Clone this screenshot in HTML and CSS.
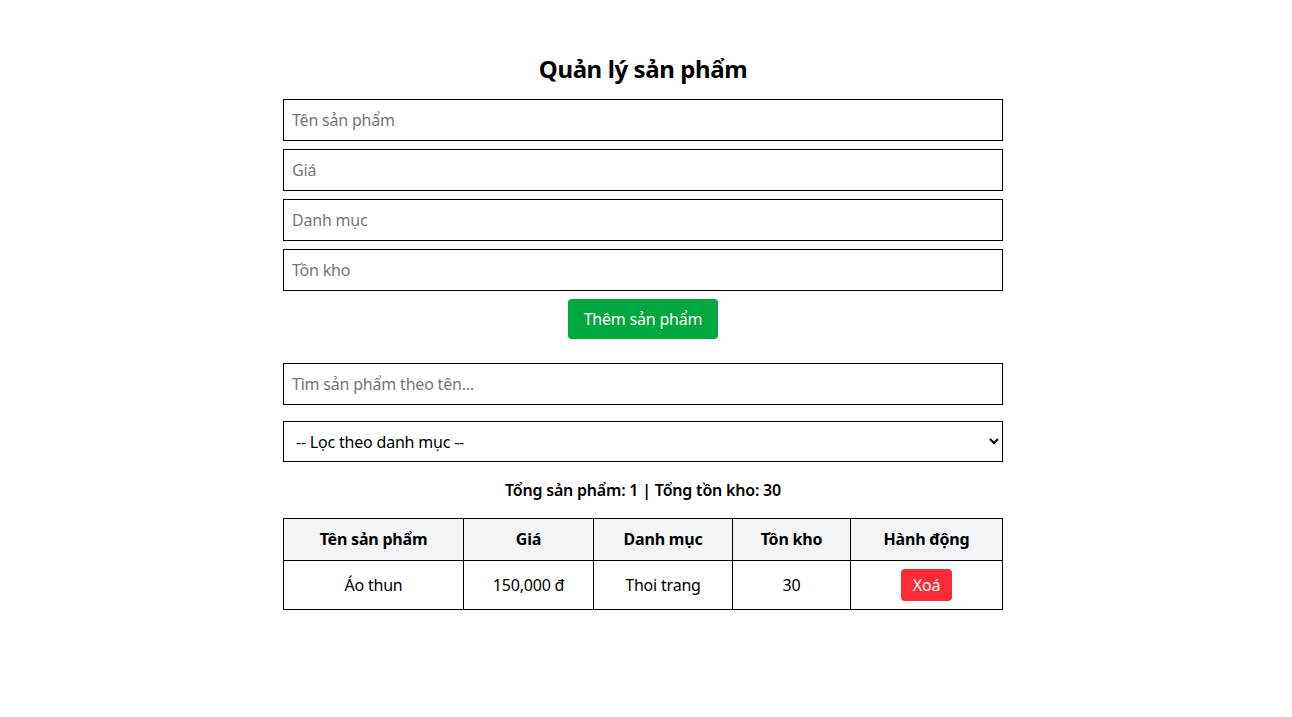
FILE: index.html
```html
<!DOCTYPE html>
<html lang="vi">
<head>
<meta charset="utf-8">
<title>Quản lý sản phẩm</title>
<link rel="stylesheet" href="styles.css">
</head>
<body>
<main class="container">
  <h1 class="title">Quản lý sản phẩm</h1>
  <form class="form">
    <input class="field" type="text" placeholder="Tên sản phẩm">
    <input class="field" type="text" placeholder="Giá">
    <input class="field" type="text" placeholder="Danh mục">
    <input class="field" type="text" placeholder="Tồn kho">
    <button class="btn-add" type="button">Thêm sản phẩm</button>
  </form>
  <input class="field search" type="text" placeholder="Tìm sản phẩm theo tên...">
  <select class="filter">
    <option>-- Lọc theo danh mục --</option>
  </select>
  <p class="summary">Tổng sản phẩm: 1 | Tổng tồn kho: 30</p>
  <table class="table">
    <colgroup>
      <col class="c-name"><col class="c-price"><col class="c-cat"><col class="c-stock"><col class="c-act">
    </colgroup>
    <thead>
      <tr><th>Tên sản phẩm</th><th>Giá</th><th>Danh mục</th><th>Tồn kho</th><th>Hành động</th></tr>
    </thead>
    <tbody>
      <tr><td>Áo thun</td><td>150,000 đ</td><td>Thoi trang</td><td>30</td><td><button class="btn-del" type="button">Xoá</button></td></tr>
    </tbody>
  </table>
</main>
</body>
</html>
```

FILE: styles.css
```css
* { box-sizing: border-box; }
html, body { background: #fff; }
body {
  margin: 0 6px 0 0;
  font-family: "Noto Sans", "Open Sans", sans-serif;
  color: #000;
  font-size: 16px;
  letter-spacing: -0.2px;
}
.container {
  width: 720px;
  margin: 0 auto;
  display: flex;
  flex-direction: column;
}
.title {
  margin: 53px 0 14px;
  font-size: 24px;
  line-height: 32px;
  font-weight: 700;
  text-align: center;
  letter-spacing: -0.4px;
}
.form {
  display: flex;
  flex-direction: column;
  gap: 8px;
}
.field {
  width: 100%;
  height: 42px;
  border: 1px solid #000;
  border-radius: 0;
  padding: 0 8px;
  font-family: inherit;
  font-size: 16px;
  letter-spacing: -0.2px;
  color: #000;
  background: #fff;
  outline: none;
}
.field::placeholder { color: #757575; }
.btn-add {
  align-self: center;
  height: 40px;
  padding: 0 16px;
  border: none;
  border-radius: 4px;
  background: #00a63e;
  color: #fff;
  font-family: inherit;
  font-size: 16px;
  letter-spacing: -0.2px;
}
.search { margin-top: 24px; }
.filter {
  margin-top: 16px;
  width: 100%;
  height: 41px;
  border: 1px solid #000;
  border-radius: 0;
  padding: 0 8px;
  background: #fff;
  color: #000;
  font-family: inherit;
  font-size: 16px;
  letter-spacing: -0.2px;
}
.summary {
  margin: 16px 0;
  text-align: center;
  font-weight: 600;
  line-height: 24px;
}
.table {
  width: 719px;
  border-collapse: collapse;
  table-layout: fixed;
}
.c-name { width: 180px; }
.c-price { width: 130px; }
.c-cat { width: 139px; }
.c-stock { width: 118px; }
.c-act { width: 152px; }
.table th, .table td {
  border: 1px solid #000;
  text-align: center;
  vertical-align: middle;
}
.table th {
  background: #f3f4f6;
  font-weight: 700;
  padding: 10px;
  line-height: 21px;
}
.table td {
  padding: 8px;
  line-height: 21px;
  height: 49px;
}
.btn-del {
  display: block;
  margin: 0 auto;
  height: 32px;
  padding: 0 12px;
  border: none;
  border-radius: 4px;
  background: #fb2c36;
  color: #fff;
  font-family: inherit;
  font-size: 16px;
  letter-spacing: -0.2px;
}
```
